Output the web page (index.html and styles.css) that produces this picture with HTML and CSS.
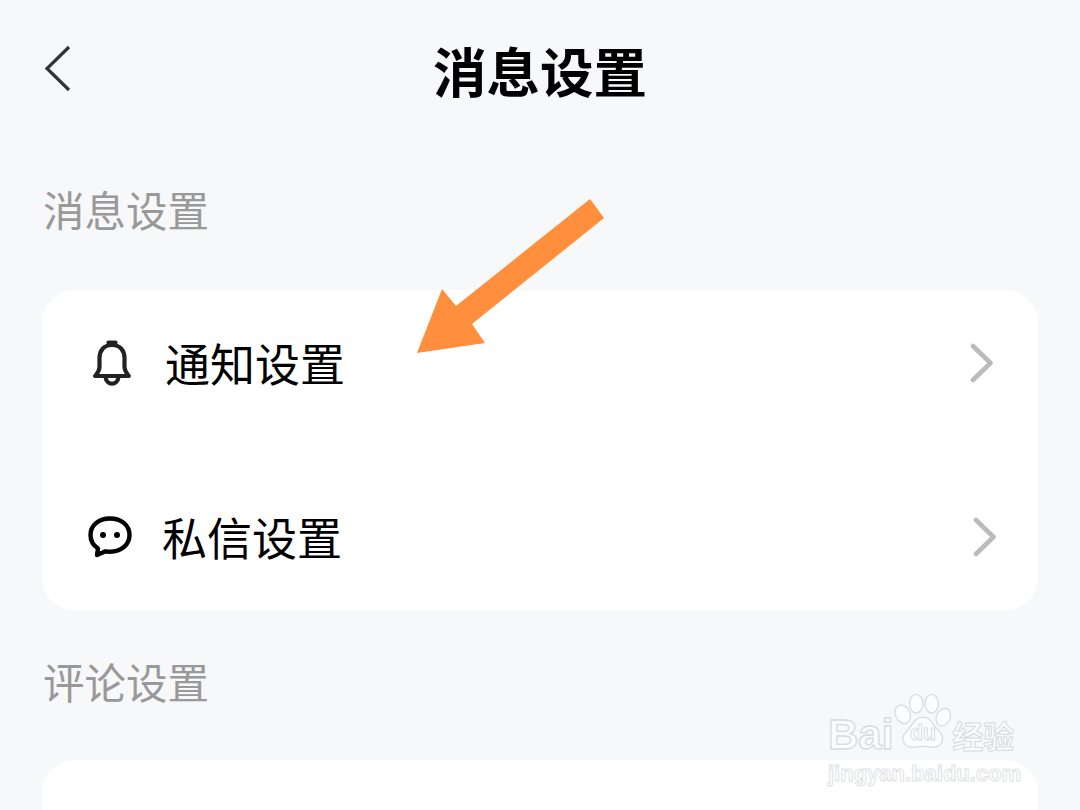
FILE: index.html
```html
<!DOCTYPE html>
<html lang="zh-CN">
<head>
    <meta charset="UTF-8">
    <meta name="viewport" content="width=device-width, initial-scale=1.0">
    <title>消息设置</title>
    <link rel="stylesheet" href="styles.css">
</head>
<body>
    <div class="page">
        <header class="header">
            <svg class="back-icon" width="28" height="48" viewBox="0 0 28 48">
                <path d="M25 2 L3 23.5 L25 45" fill="none" stroke="#333" stroke-width="3.2"/>
            </svg>
            <h1>消息设置</h1>
        </header>

        <section class="section">
            <div class="section-title">消息设置</div>
            <div class="card">
                <div class="row row-notify">
                    <svg class="row-icon" width="38" height="46" viewBox="0 0 38 46">
                        <path d="M19 5 C10.5 5 6.5 11 6.5 18 V27 C6.5 31 4.5 33 2.2 36 H35.8 C33.5 33 31.5 31 31.5 27 V18 C31.5 11 27.5 5 19 5 Z" fill="none" stroke="#222" stroke-width="4.2" stroke-linejoin="round"/>
                        <path d="M15.5 2.6 H22.5" stroke="#222" stroke-width="4.2" stroke-linecap="round"/>
                        <path d="M12.5 37 C13.5 46 24.5 46 25.5 37" fill="none" stroke="#222" stroke-width="4.2"/>
                    </svg>
                    <span class="row-label">通知设置</span>
                    <svg class="row-arrow" width="24" height="40" viewBox="0 0 24 40">
                        <path d="M3 3 L20.5 20 L3 37" fill="none" stroke="#bbb" stroke-width="4.6" stroke-linecap="round" stroke-linejoin="round"/>
                    </svg>
                </div>
                <div class="row row-message">
                    <svg class="row-icon" width="44" height="42" viewBox="0 0 44 42">
                        <path d="M22 2.5 C10.5 2.5 2.5 9.5 2.5 19 C2.5 25 5.5 29.5 10 32.5 L9 39 L17.5 35.3 C19 35.6 20.5 35.7 22 35.7 C33.5 35.7 41.5 28.5 41.5 19 C41.5 9.5 33.5 2.5 22 2.5 Z" fill="none" stroke="#000" stroke-width="4.4" stroke-linejoin="round"/>
                        <circle cx="15" cy="19" r="3" fill="#000"/>
                        <circle cx="29" cy="19" r="3" fill="#000"/>
                    </svg>
                    <span class="row-label">私信设置</span>
                    <svg class="row-arrow" width="24" height="40" viewBox="0 0 24 40">
                        <path d="M3 3 L20.5 20 L3 37" fill="none" stroke="#bbb" stroke-width="4.6" stroke-linecap="round" stroke-linejoin="round"/>
                    </svg>
                </div>
            </div>
        </section>

        <section class="section section-comment">
            <div class="section-title">评论设置</div>
            <div class="card card-cut"></div>
        </section>

        <!-- arrow and watermark sit on top of the screenshot -->
        <svg class="callout" width="200" height="170" viewBox="0 0 200 170">
            <polygon points="17,164 42,100 56,117 190,10 204,29 72,135 85,154" fill="#ff8f3c"/>
        </svg>

        <div class="watermark">
            <div class="wm-top">
                <span class="wm-bai">Bai</span>
                <svg class="wm-paw" width="58" height="56" viewBox="0 0 60 58">
                    <g fill="rgba(255,255,255,0.55)" stroke="#d8dadd" stroke-width="1.3">
                        <ellipse cx="9" cy="21" rx="7.5" ry="10" transform="rotate(-25 9 21)"/>
                        <ellipse cx="23" cy="10" rx="7" ry="9.5"/>
                        <ellipse cx="39" cy="10" rx="7" ry="9.5"/>
                        <ellipse cx="51" cy="24" rx="7" ry="9.5" transform="rotate(25 51 24)"/>
                        <path d="M30 24 C39 24 40 33 47 39 C54 46 49 56 39 55 C33 54 27 54 21 55 C11 56 5 47 12 40 C19 33 21 24 30 24 Z"/>
                    </g>
                    <text x="30" y="48" class="wm-du">du</text>
                </svg>
                <span class="wm-cn">经验</span>
            </div>
            <div class="wm-url">jingyan.baidu.com</div>
        </div>
    </div>
</body>
</html>
```

FILE: styles.css
```css
* {
    margin: 0;
    padding: 0;
    box-sizing: border-box;
}

body {
    font-family: "Noto Sans CJK SC", "Noto Sans", sans-serif;
    background: #f7f8fa;
    overflow: hidden;
}

.page {
    position: relative;
    height: 810px;
    overflow: hidden;
}

.header {
    position: relative;
    height: 144px;
    padding-bottom: 5px;
    display: flex;
    align-items: center;
    justify-content: center;
}

.back-icon {
    position: absolute;
    left: 44px;
    top: 45px;
}

h1 {
    font-size: 53.5px;
    font-weight: 700;
    color: #000;
    line-height: 60px;
}

.section {
    margin-top: 35px;
    padding: 0 42px;
}

.section-comment {
    margin-top: 41px;
}

.section-title {
    font-size: 41.5px;
    line-height: 60px;
    color: #999;
    padding-left: 1px;
    margin-bottom: 51px;
}

.section-comment .section-title {
    margin-bottom: 49px;
}

.card {
    background: #fff;
    border-radius: 32px;
    height: 320px;
    display: flex;
    flex-direction: column;
    gap: 29px;
}

.card-cut {
    height: 200px;
}

.row {
    height: 146px;
    display: flex;
    align-items: center;
}

.row-notify {
    padding: 0 44px 0 51px;
}

.row-message {
    padding: 0 41px 0 46px;
}

.row-label {
    flex: 1;
    font-size: 45px;
    line-height: 60px;
    color: #000;
    margin-left: 34px;
    margin-bottom: 0;
}

.row-message .row-label {
    margin-left: 30px;
}

.callout {
    position: absolute;
    left: 400px;
    top: 189px;
    overflow: visible;
}

.watermark {
    position: absolute;
    left: 828px;
    top: 694px;
    width: 196px;
}

.wm-top {
    display: flex;
    align-items: flex-end;
    height: 66px;
}

.wm-bai {
    font-family: "Liberation Sans", sans-serif;
    font-size: 42px;
    font-weight: 700;
    line-height: 50px;
    color: rgba(255, 255, 255, 0.6);
    -webkit-text-stroke: 1.3px #d8dadd;
    margin-right: 1px;
}

.wm-paw {
    flex: none;
    margin-bottom: 10px;
}

.wm-du {
    font-family: "Liberation Sans", sans-serif;
    font-size: 22px;
    font-weight: 700;
    text-anchor: middle;
    fill: rgba(255, 255, 255, 0.7);
    stroke: #d8dadd;
    stroke-width: 0.9;
}

.wm-cn {
    font-size: 31px;
    font-weight: 700;
    line-height: 42px;
    color: rgba(255, 255, 255, 0.6);
    -webkit-text-stroke: 1px #d8dadd;
    margin-bottom: 4px;
}

.wm-url {
    font-family: "Liberation Sans", sans-serif;
    font-size: 22px;
    line-height: 28px;
    font-weight: 700;
    white-space: nowrap;
    color: rgba(255, 255, 255, 0.6);
    -webkit-text-stroke: 1px #e0e2e5;
}
```
